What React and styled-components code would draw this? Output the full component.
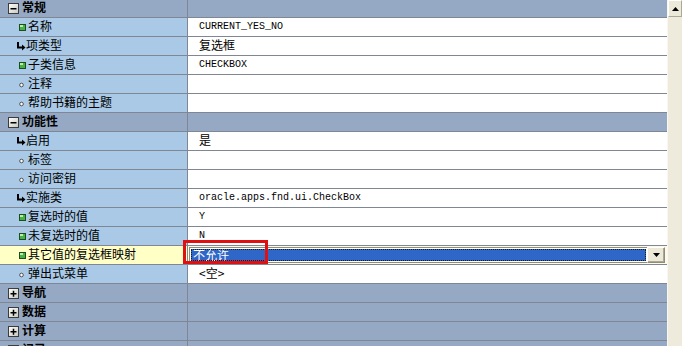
import React from 'react';
import styled, { createGlobalStyle } from 'styled-components';

const GlobalStyle = createGlobalStyle`
  html, body {
    margin: 0;
    padding: 0;
    background: #ffffff;
  }
  body {
    width: 682px;
    height: 346px;
    overflow: hidden;
    font-family: "Noto Sans CJK SC", "Liberation Sans", sans-serif;
  }
`;

const sections = [
  {
    title: '常规',
    open: true,
    items: [
      { icon: 'dot', label: '名称', value: 'CURRENT_YES_NO', mono: true },
      { icon: 'arrow', label: '项类型', value: '复选框' },
      { icon: 'dot', label: '子类信息', value: 'CHECKBOX', mono: true },
      { icon: 'ring', label: '注释', value: '' },
      { icon: 'ring', label: '帮助书籍的主题', value: '' },
    ],
  },
  {
    title: '功能性',
    open: true,
    items: [
      { icon: 'arrow', label: '启用', value: '是' },
      { icon: 'ring', label: '标签', value: '' },
      { icon: 'ring', label: '访问密钥', value: '' },
      { icon: 'arrow', label: '实施类', value: 'oracle.apps.fnd.ui.CheckBox', mono: true },
      { icon: 'dot', label: '复选时的值', value: 'Y', mono: true },
      { icon: 'dot', label: '未复选时的值', value: 'N', mono: true },
      { icon: 'dot', label: '其它值的复选框映射', value: '不允许', select: true },
      { icon: 'ring', label: '弹出式菜单', value: '<空>' },
    ],
  },
  { title: '导航', open: false, items: [] },
  { title: '数据', open: false, items: [] },
  { title: '计算', open: false, items: [] },
  { title: '记录', open: false, items: [] },
];

const Page = styled.div`
  display: flex;
  width: 682px;
  height: 346px;
  overflow: hidden;
`;

const SheetArea = styled.div`
  position: relative;
  flex: 1;
  display: flex;
`;

const Sheet = styled.div`
  flex: 1;
  display: flex;
  flex-direction: column;
  margin-top: -1px;
  background: #95a9c4;
`;

const Row = styled.div`
  display: grid;
  grid-template-columns: 188px 1fr;
  height: 18px;
  flex: 0 0 18px;
  border-bottom: 1px solid #7f8794;
`;

const LabelCell = styled.div`
  display: flex;
  align-items: center;
  border-right: 1px solid #7f8794;
  background: ${({ $kind }) =>
    $kind === 'group' ? '#95a9c4' : $kind === 'active' ? '#ffffc6' : '#a9c9e6'};
  padding: 0 0 2px ${({ $kind }) => ($kind === 'group' ? '8px' : '18px')};
  font-size: 12px;
  line-height: 16px;
  font-weight: ${({ $kind }) => ($kind === 'group' ? 700 : 400)};
  color: #000;
  white-space: nowrap;
  overflow: hidden;
`;

const ValueCell = styled.div`
  display: flex;
  align-items: center;
  background: ${({ $group }) => ($group ? '#95a9c4' : '#ffffff')};
  padding: 0 0 ${({ $mono }) => ($mono ? '0' : '2px')} 11px;
  font-family: ${({ $mono }) =>
    $mono ? '"Liberation Mono", "DejaVu Sans Mono", monospace' : '"Noto Sans CJK SC", sans-serif'};
  font-size: ${({ $mono }) => ($mono ? '10px' : '12px')};
  line-height: 16px;
  color: #000;
  white-space: nowrap;
  overflow: hidden;
`;

const SelectCell = styled.div`
  display: flex;
  align-items: stretch;
  background: #fffbe6;
  padding: 1px 2px 1px 1px;
`;

const SelectField = styled.div`
  flex: 1;
  display: flex;
  align-items: stretch;
  border: 1px solid #8c8c80;
  border-right: none;
  background: #ffffff;
  padding: 1px;
`;

const Selected = styled.div`
  flex: 1;
  display: flex;
  align-items: center;
  background: #2f67c8;
  color: #ffffff;
  outline: 1px dotted #1a1a1a;
  outline-offset: -1px;
  padding: 0 0 0 2px;
  font-size: 12px;
  line-height: 12px;
  white-space: nowrap;
`;

const DropButton = styled.div`
  width: 16px;
  display: flex;
  align-items: center;
  justify-content: center;
  background: #ece9d8;
  border: 1px solid;
  border-color: #ffffff #8c8c80 #8c8c80 #ffffff;
  box-shadow: inset -1px -1px 0 #aca899;
`;

const Highlight = styled.div`
  position: absolute;
  left: 183px;
  top: 240px;
  width: 79px;
  height: 18px;
  border: 3px solid #e01010;
  pointer-events: none;
`;

const ScrollTrack = styled.div`
  width: 14px;
  flex: 0 0 14px;
  background: #eeebdc;
  border-left: 1px solid #f8f7f0;
  display: flex;
  flex-direction: column;
`;

const ScrollButton = styled.div`
  height: 15px;
  display: flex;
  align-items: center;
  justify-content: center;
  background: #ece9d8;
  border: 1px solid;
  border-color: #ffffff #aca899 #aca899 #ffffff;
`;

const ToggleBox = ({ open }) => (
  <svg width="11" height="11" viewBox="0 0 11 11" style={{ marginRight: 3, marginTop: 2, flex: 'none' }}>
    <defs>
      <linearGradient id="tg" x1="0" y1="0" x2="1" y2="1">
        <stop offset="0" stopColor="#ffffff" />
        <stop offset="1" stopColor="#c8c8c0" />
      </linearGradient>
    </defs>
    <rect x="0.5" y="0.5" width="10" height="10" fill="url(#tg)" stroke="#3c3c3c" />
    <rect x="2.5" y="5" width="6" height="1.5" fill="#000" />
    {!open && <rect x="4.75" y="2.75" width="1.5" height="6" fill="#000" />}
  </svg>
);

const ItemIcon = ({ type }) => {
  if (type === 'dot') {
    return (
      <svg width="10" height="8" viewBox="0 0 10 8" style={{ flex: 'none', marginTop: 2 }}>
        <rect x="1.5" y="1.5" width="6" height="6" fill="#48b048" stroke="#1d4d1d" />
        <rect x="2" y="2" width="3" height="2" fill="#b8f0a0" />
      </svg>
    );
  }
  if (type === 'arrow') {
    return (
      <svg width="9" height="9" viewBox="0 0 9 9" style={{ flex: 'none', marginLeft: -1, marginTop: 2 }}>
        <path d="M1 0 V5.5 H5" stroke="#000" strokeWidth="2" fill="none" />
        <path d="M5 2.5 L8.5 5.5 L5 8.5 Z" fill="#000" />
      </svg>
    );
  }
  return (
    <svg width="10" height="8" viewBox="0 0 10 8" style={{ flex: 'none', marginTop: 2 }}>
      <circle cx="3.5" cy="5" r="1.8" fill="#fff" stroke="#505050" strokeWidth="1" />
    </svg>
  );
};

const Arrow = ({ up }) => (
  <svg width="7" height="4" viewBox="0 0 7 4">
    <path d={up ? 'M0 4 L3.5 0 L7 4 Z' : 'M0 0 L7 0 L3.5 4 Z'} fill="#000" />
  </svg>
);

export default function App() {
  return (
    <>
      <GlobalStyle />
      <Page>
        <SheetArea>
          <Sheet>
            {sections.map((s) => (
              <React.Fragment key={s.title}>
                <Row>
                  <LabelCell $kind="group">
                    <ToggleBox open={s.open} />
                    {s.title}
                  </LabelCell>
                  <ValueCell $group />
                </Row>
                {s.items.map((it) => (
                  <Row key={it.label}>
                    <LabelCell $kind={it.select ? 'active' : 'item'}>
                      <ItemIcon type={it.icon} />
                      {it.label}
                    </LabelCell>
                    {it.select ? (
                      <SelectCell>
                        <SelectField>
                          <Selected>{it.value}</Selected>
                        </SelectField>
                        <DropButton>
                          <Arrow />
                        </DropButton>
                      </SelectCell>
                    ) : (
                      <ValueCell $mono={it.mono}>{it.value}</ValueCell>
                    )}
                  </Row>
                ))}
              </React.Fragment>
            ))}
          </Sheet>
          <Highlight />
        </SheetArea>
        <ScrollTrack>
          <ScrollButton>
            <Arrow up />
          </ScrollButton>
        </ScrollTrack>
      </Page>
    </>
  );
}
